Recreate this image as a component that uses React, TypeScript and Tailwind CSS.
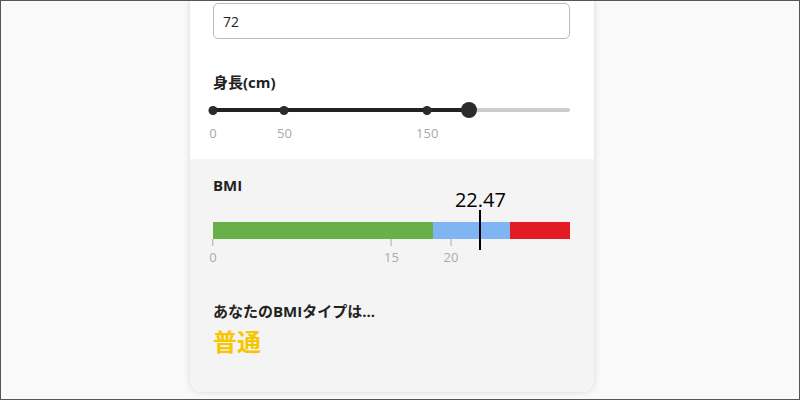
import React from "react";

const HEIGHT_MAX = 250;
const BMI_MAX = 30;

const heightMarks = [0, 50, 150];
const bmiTicks = [0, 15, 20];

export default function App() {
  const weight = 72;
  const height = 179;
  const bmi = weight / Math.pow(height / 100, 2);
  const heightPct = (height / HEIGHT_MAX) * 100;
  const bmiPct = (bmi / BMI_MAX) * 100;

  return (
    <div
      className="h-[400px] w-[800px] overflow-hidden border border-[#555] bg-[#f9f9f9] text-[#222]"
      style={{ fontFamily: '"Open Sans", "Noto Sans CJK JP", sans-serif' }}
    >
      <div className="ml-[189px] w-[404px] overflow-hidden rounded-b-[12px] bg-white shadow-[0_0_6px_rgba(0,0,0,0.14)]">
        {/* 入力 */}
        <div className="pl-[23px] pr-[24px] pt-[2px] pb-[18px]">
          <div className="flex h-[36px] items-center rounded-[5px] border border-[#b9b9b9] px-[9px] text-[14px]">
            {weight}
          </div>

          <div className="mt-[33px] h-[20px] text-[15px] font-bold leading-[20px]">身長(cm)</div>

          <div className="relative mt-[8px] h-[20px]">
            <div className="absolute left-0 right-0 top-[8px] h-[4px] rounded-full bg-[#cccccc]" />
            <div
              className="absolute left-0 top-[8px] h-[4px] rounded-full bg-[#222]"
              style={{ width: `${heightPct}%` }}
            />
            {heightMarks.map((m) => (
              <div
                key={m}
                className="absolute top-[5.5px] h-[9px] w-[9px] -translate-x-1/2 rounded-full bg-[#2b2b2b]"
                style={{ left: `${(m / HEIGHT_MAX) * 100}%` }}
              />
            ))}
            <div
              className="absolute top-[2px] h-[16px] w-[16px] -translate-x-1/2 rounded-full bg-[#2b2b2b]"
              style={{ left: `${heightPct}%` }}
            />
          </div>

          <div className="relative mt-[5px] h-[16px] text-[13px] leading-[16px] text-[#aaa]">
            {heightMarks.map((m) => (
              <span
                key={m}
                className="absolute top-0 -translate-x-1/2"
                style={{ left: `${(m / HEIGHT_MAX) * 100}%` }}
              >
                {m}
              </span>
            ))}
          </div>
        </div>

        {/* 結果 */}
        <div className="bg-[#f4f4f4] pl-[23px] pr-[24px] pt-[16px] pb-[34px]">
          <div className="h-[20px] text-[15px] font-bold leading-[20px]">BMI</div>

          <div className="relative mt-[27px]">
            <div className="flex h-[17px] w-full">
              <div className="h-full bg-[#67b04a]" style={{ width: `${(18.5 / BMI_MAX) * 100}%` }} />
              <div className="h-full bg-[#80b4f2]" style={{ width: `${(6.5 / BMI_MAX) * 100}%` }} />
              <div className="h-full flex-1 bg-[#e31b23]" />
            </div>

            <div className="relative h-[26px] text-[13px] leading-[16px] text-[#aaa]">
              {bmiTicks.map((t) => (
                <div
                  key={t}
                  className="absolute top-0 flex -translate-x-1/2 flex-col items-center"
                  style={{ left: `${(t / BMI_MAX) * 100}%` }}
                >
                  <div className="h-[7px] w-px bg-[#aaa]" />
                  <span className="mt-[3px]">{t}</span>
                </div>
              ))}
            </div>

            <div
              className="absolute top-[-12px] h-[40px] w-[2px] -translate-x-1/2 bg-black"
              style={{ left: `${bmiPct}%` }}
            />
            <div
              className="absolute top-[-36px] -translate-x-1/2 text-[20px] leading-[28px] text-black"
              style={{ left: `${bmiPct}%` }}
            >
              {bmi.toFixed(2)}
            </div>
          </div>

          <div className="mt-[35px] h-[22px] text-[15px] font-bold leading-[22px]">あなたのBMIタイプは...</div>
          <div className="mt-[4px] h-[32px] text-[24px] font-bold leading-[32px] text-[#f7c600]">普通</div>
        </div>
      </div>
    </div>
  );
}
